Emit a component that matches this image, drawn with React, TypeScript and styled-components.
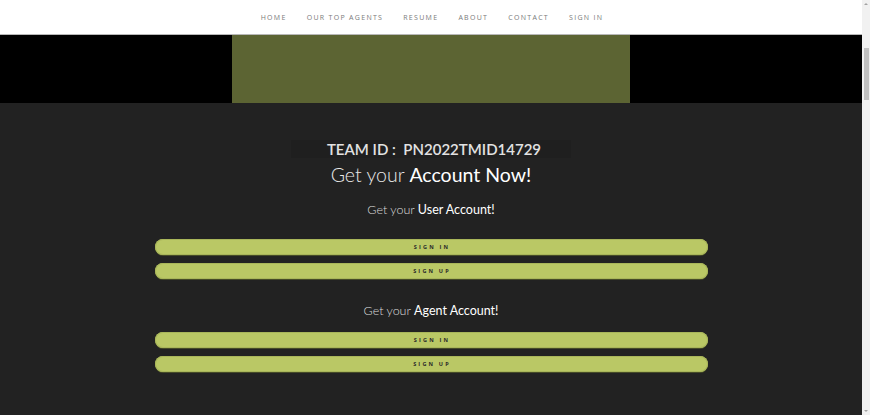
import React from "react";
import styled, { createGlobalStyle } from "styled-components";

const Global = createGlobalStyle`
  html, body { margin: 0; padding: 0; height: 100%; overflow: hidden; }
  body { font-family: "Lato", "Open Sans", sans-serif; background: #222; }
  #root { height: 100%; }
`;

const Shell = styled.div`
  display: flex;
  width: 870px;
  height: 415px;
`;

const Page = styled.div`
  flex: 1;
  display: flex;
  flex-direction: column;
  min-width: 0;
`;

const NavBar = styled.nav`
  background: #fff;
  border-bottom: 1px solid #b8b8b8;
  display: flex;
  align-items: center;
  justify-content: center;
  gap: 20px;
  padding: 1px 0 0 2px;
  box-sizing: border-box;
  height: 35px;
`;

const NavLink = styled.a`
  font-family: "Open Sans", sans-serif;
  font-size: 7px;
  letter-spacing: 1.3px;
  color: #7a7a7a;
  text-transform: uppercase;
  text-decoration: none;
`;

const Hero = styled.div`
  height: 68px;
  background: #000;
  display: flex;
  justify-content: center;
`;

const HeroImage = styled.div`
  width: 398px;
  background: #5c6433;
`;

const Section = styled.section`
  flex: 1;
  background: #222;
  display: flex;
  flex-direction: column;
  align-items: center;
  padding-top: 37px;
`;

const TeamBand = styled.div`
  width: 280px;
  height: 18px;
  background: #1f1f1f;
  display: flex;
  align-items: center;
  justify-content: center;
  padding-left: 6px;
  box-sizing: border-box;
  color: #e2e2e2;
  font-size: 15px;
  font-weight: 600;
  white-space: pre;
`;

const Heading = styled.h2`
  margin: 4px 0 0;
  font-size: 19.5px;
  font-weight: 300;
  color: #e8e8e8;
  line-height: 26px;
  b { font-weight: 400; color: #fff; }
`;

const SubHeading = styled.h3<{ $top: number }>`
  margin: ${(p) => p.$top}px 0 0;
  font-size: 12.5px;
  font-weight: 300;
  color: #dcdcdc;
  line-height: 18px;
  b { font-weight: 400; color: #fff; }
`;

const ButtonStack = styled.div<{ $top: number }>`
  margin-top: ${(p) => p.$top}px;
  display: flex;
  flex-direction: column;
  gap: 8px;
`;

const Pill = styled.button`
  width: 553px;
  height: 16px;
  border: none;
  border-radius: 8px;
  background: #bac865;
  box-shadow: inset 0 0 0 1px #a9b65a, 0 1px 0 #464b28;
  font-family: "Open Sans", sans-serif;
  font-size: 5.5px;
  font-weight: 700;
  letter-spacing: 2.2px;
  color: #2a2a2a;
  padding: 0 0 0 2px;
  cursor: pointer;
  display: flex;
  align-items: center;
  justify-content: center;
`;

const Scrollbar = styled.div`
  width: 8px;
  background: #f1f1f1;
  display: flex;
  flex-direction: column;
  align-items: center;
`;

const Arrow = styled.div<{ $down?: boolean }>`
  width: 0;
  height: 0;
  margin-top: ${(p) => (p.$down ? "auto" : "3px")};
  margin-bottom: ${(p) => (p.$down ? "3px" : "0")};
  border-left: 2px solid transparent;
  border-right: 2px solid transparent;
  ${(p) => (p.$down ? "border-top: 2px solid #a3a3a3;" : "border-bottom: 2px solid #a3a3a3;")}
`;

const Thumb = styled.div`
  width: 5px;
  height: 52px;
  margin-top: 43px;
  background: #c1c1c1;
`;

const Group: React.FC<{ label: string; top: number; stackTop: number }> = ({ label, top, stackTop }) => (
  <>
    <SubHeading $top={top}>
      Get your <b>{label} Account!</b>
    </SubHeading>
    <ButtonStack $top={stackTop}>
      <Pill>SIGN IN</Pill>
      <Pill>SIGN UP</Pill>
    </ButtonStack>
  </>
);

export default function App() {
  const links = ["Home", "Our Top Agents", "Resume", "About", "Contact", "Sign In"];
  return (
    <>
      <Global />
      <Shell>
        <Page>
          <NavBar>
            {links.map((l) => (
              <NavLink key={l}>{l}</NavLink>
            ))}
          </NavBar>
          <Hero>
            <HeroImage />
          </Hero>
          <Section>
            <TeamBand>{"TEAM ID :  PN2022TMID14729"}</TeamBand>
            <Heading>
              Get your <b>Account Now!</b>
            </Heading>
            <Group label="User" top={13} stackTop={20} />
            <Group label="Agent" top={23} stackTop={12} />
          </Section>
        </Page>
        <Scrollbar>
          <Arrow />
          <Thumb />
          <Arrow $down />
        </Scrollbar>
      </Shell>
    </>
  );
}
